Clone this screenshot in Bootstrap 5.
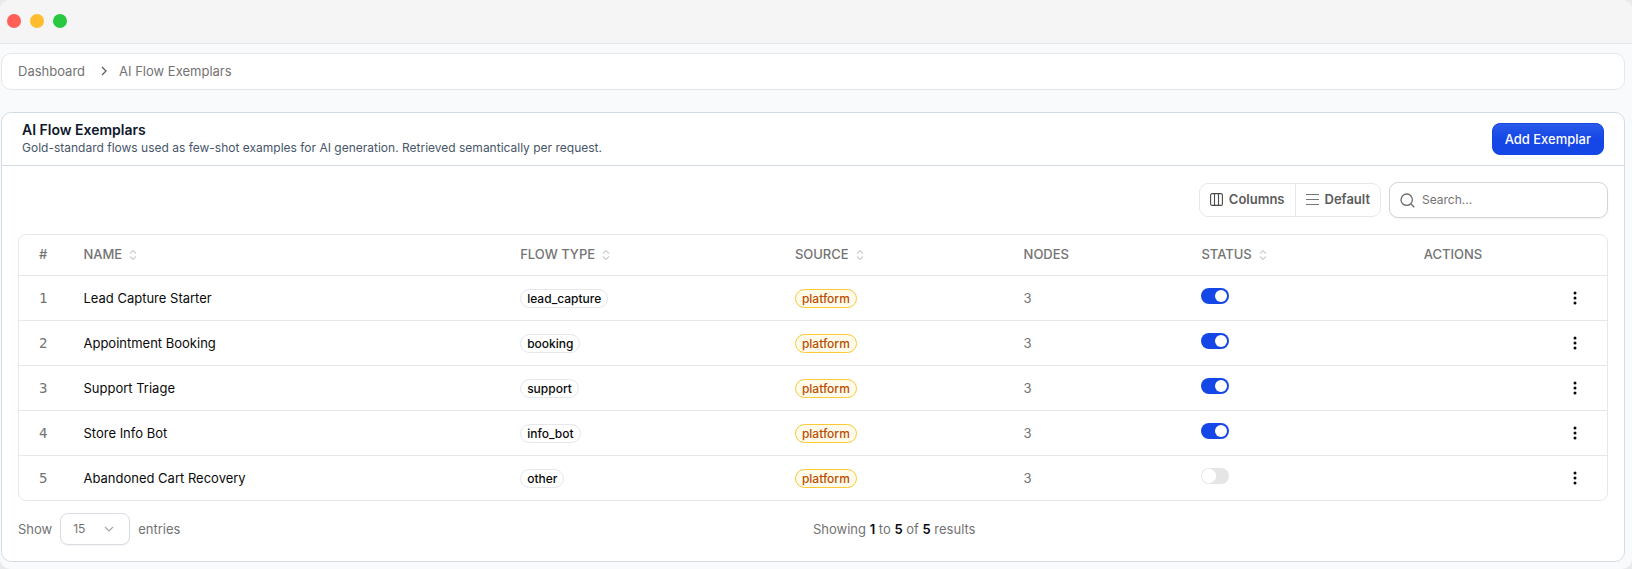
<!DOCTYPE html>
<html lang="en">
<head>
<meta charset="utf-8">
<meta name="viewport" content="width=device-width, initial-scale=1">
<title>AI Flow Exemplars</title>
<link href="https://cdn.jsdelivr.net/npm/bootstrap@5.3.0/dist/css/bootstrap.min.css" rel="stylesheet">
<style>
  :root { --ink: #0a0a0a; --muted: #737373; --line: #e5e7eb; --frame: #d3dce6; --brand: #1447e6; }
  html { background: #e9eaec; }
  body { font-family: Inter, "Liberation Sans", sans-serif; font-size: 13px; line-height: 20px; color: var(--muted); background: transparent; }
  .window { min-height: 100vh; background: #f8fafc; border-radius: 10px; overflow: hidden; }
  .titlebar { height: 44px; padding: 0 7px 2px; gap: 9px; background: #f5f5f5; border-bottom: 1px solid #e4e7e7; }
  .dot { width: 14px; height: 14px; border-radius: 50%; }
  .content { padding: 9px 7px 7px 1px; }
  .panel { background: #fff; border: 1px solid var(--line); border-radius: 10px; }
  .crumbs { padding: 7px 16px 9px; height: 37px; margin-bottom: 22px; }
  .crumbs a { color: inherit; text-decoration: none; }
  .crumbs svg { margin: 0 12px 0 16px; }
  .main-panel { border-color: var(--frame); }
  .panel-head { padding: 0 20px 1px; height: 53px; border-bottom: 1px solid var(--frame); }
  .panel-head h1 { font-size: 14px; line-height: 18px; font-weight: 600; color: #0f172a; margin: 0; }
  .panel-head p { font-size: 12px; line-height: 17px; color: #475569; margin: 0; }
  .btn-brand { --bs-btn-color: #fff; --bs-btn-hover-color: #fff; --bs-btn-hover-bg: #1d4fe8; --bs-btn-bg: var(--brand);
    font-size: 13px; line-height: 20px; font-weight: 500; padding: 5px 12px; border: 1px solid var(--brand); border-radius: 8px;
    background-image: linear-gradient(#2a5bea, var(--brand) 50%); }
  .panel-body { padding: 16px; }
  .tools { gap: 8px; margin-bottom: 16px; }
  .tools .btn { --bs-btn-color: #5c5c5c; --bs-btn-border-color: var(--line); font-size: 13px; line-height: 20px; font-weight: 600; padding: 5px 10px 7px; border-radius: 9px; display: flex; align-items: center; gap: 6px; }
  .search { width: 219px; height: 36px; border: 1px solid #d4d4d4; border-radius: 9px; padding: 0 10px; gap: 7px; box-shadow: 0 1px 2px rgba(0,0,0,.06); }
  .search input { border: 0; outline: 0; min-width: 0; flex: 1; padding: 0; font-size: 12px; color: var(--ink); background: transparent; }
  .search input::placeholder { color: #737373; opacity: 1; }
  .table-frame { border: 1px solid var(--line); border-radius: 8px; overflow: hidden; }
  .flows { table-layout: fixed; margin: 0; color: var(--muted); --bs-table-color: var(--muted); }
  .flows > :not(caption) > * > * { padding: 0 0 0 20px; height: 45px; vertical-align: middle; border-bottom: 1px solid var(--line); }
  .flows > tbody > tr:last-child > * { border-bottom: 0; }
  .flows > thead > tr > th { height: 40px; padding-bottom: 2px; font-size: 13px; font-weight: 500; text-transform: uppercase; white-space: nowrap; }
  .flows > tbody > tr > td:last-child { padding-right: 20px; }
  .sort { margin-left: 7px; }
  .index { font-family: "DejaVu Sans Mono", monospace; font-size: 14px; }
  .flow-name { color: var(--ink); }
  .pill { display: inline-block; font-size: 12px; line-height: 17px; font-weight: 500; color: var(--ink); border: 1px solid var(--line); border-radius: 10px; padding: 0 6px; }
  .pill-amber { color: #bb4d00; background: #fffbeb; border-color: #fcc937; }
  .flows .form-check-input { display: block; width: 28px; height: 16px; margin: 0 0 4px; border: 0; background-color: #e5e5e5; --bs-form-switch-bg: url("data:image/svg+xml,%3csvg xmlns='http://www.w3.org/2000/svg' viewBox='-4 -4 8 8'%3e%3ccircle r='3.6' fill='%23fff'/%3e%3c/svg%3e"); background-image: var(--bs-form-switch-bg); background-size: 16px 16px; }
  .flows .form-check-input:checked { background-color: var(--brand); }
  .btn-more { display: block; width: 24px; height: 24px; padding: 0; border: 0; margin-left: auto; line-height: 0; }
  .foot { padding-top: 12px; }
  .page-size { width: 70px; height: 32px; padding: 0 10px 0 12px; font-size: 12px; line-height: 20px; color: var(--muted); border-color: #d9dde3; border-radius: 8px; box-shadow: 0 1px 2px rgba(0,0,0,.05);
    background-image: url("data:image/svg+xml,%3csvg xmlns='http://www.w3.org/2000/svg' viewBox='0 0 12 12'%3e%3cpath d='M2 4l4 4 4-4' fill='none' stroke='%23a3a3a3' stroke-width='1.1'/%3e%3c/svg%3e"); background-size: 12px 12px; background-position: right 14px center; }
  .foot strong { font-weight: 600; color: var(--ink); }
</style>
</head>
<body>
<svg class="d-none" aria-hidden="true">
  <symbol id="updown" viewBox="0 0 8 12"><path d="M1 4.5L4 1.5l3 3M1 7.5l3 3 3-3" fill="none" stroke="#cfcfcf" stroke-width="1.2"/></symbol>
  <symbol id="more" viewBox="0 0 24 24"><g fill="#0a0a0a"><circle cx="12" cy="7" r="1.5"/><circle cx="12" cy="12" r="1.5"/><circle cx="12" cy="17" r="1.5"/></g></symbol>
</svg>
<div class="window">
  <header class="titlebar d-flex align-items-center">
    <span class="dot" style="background:#ff5f57"></span>
    <span class="dot" style="background:#febc2e"></span>
    <span class="dot" style="background:#28c840"></span>
  </header>
  <main class="content">
    <nav class="panel crumbs d-flex align-items-center" aria-label="breadcrumb">
      <a href="#">Dashboard</a>
      <svg width="6" height="10" viewBox="0 0 6 10" aria-hidden="true"><path d="M1 1l4 4-4 4" fill="none" stroke="#606060" stroke-width="1.3"/></svg>
      <span aria-current="page">AI Flow Exemplars</span>
    </nav>
    <section class="panel main-panel">
      <div class="panel-head d-flex align-items-center justify-content-between">
        <div><h1>AI Flow Exemplars</h1><p>Gold-standard flows used as few-shot examples for AI generation. Retrieved semantically per request.</p></div>
        <button type="button" class="btn btn-brand">Add Exemplar</button>
      </div>
      <div class="panel-body">
        <div class="tools d-flex justify-content-end align-items-center">
          <div class="btn-group">
            <button type="button" class="btn"><svg width="13" height="13" viewBox="0 0 13 13" fill="none" stroke="#4a4a4a" stroke-width="1.1"><rect x=".6" y=".6" width="11.8" height="11.8" rx="1.5"/><path d="M4.5 .6v11.8M8.5 .6v11.8"/></svg>Columns</button>
            <button type="button" class="btn"><svg width="13" height="13" viewBox="0 0 13 13" stroke="#777" stroke-width="1.1"><path d="M0 1.5h13M0 6.5h13M0 11.5h13"/></svg>Default</button>
          </div>
          <label class="search d-flex align-items-center">
            <svg width="15" height="15" viewBox="0 0 15 15" fill="none" stroke="#6b6b6b" stroke-width="1.3"><circle cx="6.7" cy="6.7" r="5.7"/><path d="M11 11l3.3 3.3"/></svg>
            <input type="search" placeholder="Search..." aria-label="Search">
          </label>
        </div>
        <div class="table-frame">
          <table class="table flows">
            <colgroup><col style="width:2.8%"><col style="width:27.5%"><col style="width:17.3%"><col style="width:14.4%"><col style="width:11.2%"><col style="width:14%"><col style="width:12.8%"></colgroup>
            <thead><tr>
              <th scope="col">#</th>
              <th scope="col">Name<svg class="sort" width="8" height="12"><use href="#updown"/></svg></th>
              <th scope="col">Flow type<svg class="sort" width="8" height="12"><use href="#updown"/></svg></th>
              <th scope="col">Source<svg class="sort" width="8" height="12"><use href="#updown"/></svg></th>
              <th scope="col">Nodes</th>
              <th scope="col">Status<svg class="sort" width="8" height="12"><use href="#updown"/></svg></th>
              <th scope="col">Actions</th>
            </tr></thead>
            <tbody>
              <tr><td class="index">1</td><td class="flow-name">Lead Capture Starter</td><td><span class="pill">lead_capture</span></td><td><span class="pill pill-amber">platform</span></td><td>3</td><td><div class="form-switch p-0 m-0"><input class="form-check-input" type="checkbox" role="switch" aria-label="Lead Capture Starter status" checked></div></td><td><button type="button" class="btn btn-more" aria-label="Actions"><svg width="24" height="24"><use href="#more"/></svg></button></td></tr>
              <tr><td class="index">2</td><td class="flow-name">Appointment Booking</td><td><span class="pill">booking</span></td><td><span class="pill pill-amber">platform</span></td><td>3</td><td><div class="form-switch p-0 m-0"><input class="form-check-input" type="checkbox" role="switch" aria-label="Appointment Booking status" checked></div></td><td><button type="button" class="btn btn-more" aria-label="Actions"><svg width="24" height="24"><use href="#more"/></svg></button></td></tr>
              <tr><td class="index">3</td><td class="flow-name">Support Triage</td><td><span class="pill">support</span></td><td><span class="pill pill-amber">platform</span></td><td>3</td><td><div class="form-switch p-0 m-0"><input class="form-check-input" type="checkbox" role="switch" aria-label="Support Triage status" checked></div></td><td><button type="button" class="btn btn-more" aria-label="Actions"><svg width="24" height="24"><use href="#more"/></svg></button></td></tr>
              <tr><td class="index">4</td><td class="flow-name">Store Info Bot</td><td><span class="pill">info_bot</span></td><td><span class="pill pill-amber">platform</span></td><td>3</td><td><div class="form-switch p-0 m-0"><input class="form-check-input" type="checkbox" role="switch" aria-label="Store Info Bot status" checked></div></td><td><button type="button" class="btn btn-more" aria-label="Actions"><svg width="24" height="24"><use href="#more"/></svg></button></td></tr>
              <tr><td class="index">5</td><td class="flow-name">Abandoned Cart Recovery</td><td><span class="pill">other</span></td><td><span class="pill pill-amber">platform</span></td><td>3</td><td><div class="form-switch p-0 m-0"><input class="form-check-input" type="checkbox" role="switch" aria-label="Abandoned Cart Recovery status"></div></td><td><button type="button" class="btn btn-more" aria-label="Actions"><svg width="24" height="24"><use href="#more"/></svg></button></td></tr>
            </tbody>
          </table>
        </div>
        <div class="foot d-flex justify-content-between align-items-center">
          <div class="d-flex align-items-center gap-2"><label for="pageSize">Show</label><select id="pageSize" class="form-select page-size"><option>15</option><option>30</option><option>50</option></select><span>entries</span></div>
          <div>Showing <strong>1</strong> to <strong>5</strong> of <strong>5</strong> results</div>
          <div></div>
        </div>
      </div>
    </section>
  </main>
</div>
<script src="https://cdn.jsdelivr.net/npm/bootstrap@5.3.0/dist/js/bootstrap.bundle.min.js"></script>
</body>
</html>
